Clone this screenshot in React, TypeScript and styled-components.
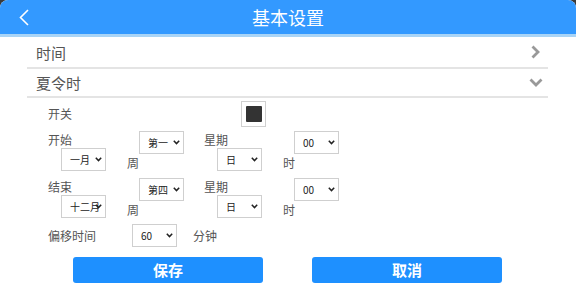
import React from 'react'
import styled, { createGlobalStyle } from 'styled-components'

const GlobalStyle = createGlobalStyle`
    html, body {
        margin: 0;
        padding: 0;
        background: #3a3a3a;
    }
    body {
        font-family: "Noto Sans CJK SC", "Noto Sans", sans-serif;
    }
`;

const Page = styled.div`
    width: 576px;
    height: 284px;
    background: #fff;
    border-radius: 8px 8px 0 0;
    overflow: hidden;
`;

const Header = styled.div`
    height: 34px;
    background: #3399ff;
    border-bottom: 3px solid #a9d4f6;
    display: grid;
    grid-template-columns: 1fr auto 1fr;
    align-items: center;
`;

const BackBtn = styled.div`
    display: flex;
    align-items: center;
    padding-left: 18px;
`;

const Title = styled.div`
    color: #fff;
    font-size: 18px;
    line-height: 20px;
`;

const Body = styled.div`
    margin: 0 28px 0 27px;
`;

const MenuRow = styled.div<{ $h: number }>`
    height: ${p => p.$h}px;
    border-bottom: 2px solid #e4e4e4;
    display: flex;
    align-items: center;
    justify-content: space-between;
    padding: 0 8px 0 9px;
    color: #555;
    font-size: 15px;
`;

const Content = styled.div`
    padding: 3px 0 2px 21px;
    border-bottom: 2px solid #e4e4e4;
    color: #555;
    font-size: 12px;
    line-height: 16px;
`;

const SwitchRow = styled.div`
    display: flex;
    align-items: center;
    height: 26px;
`;

const Label = styled.div<{ $w?: number }>`
    width: ${p => (p.$w ? `${p.$w}px` : 'auto')};
    white-space: nowrap;
`;

const CheckBox = styled.div`
    width: 23px;
    height: 24px;
    border: 1px solid #d0d0d0;
    display: flex;
    align-items: center;
    justify-content: center;
`;

const CheckInner = styled.div`
    width: 16px;
    height: 16px;
    background: #333;
    border-radius: 1px;
`;

const Block = styled.div<{ $mt: number }>`
    display: flex;
    align-items: flex-start;
    margin-top: ${p => p.$mt}px;
`;

const Col = styled.div<{ $w?: number }>`
    width: ${p => (p.$w ? `${p.$w}px` : 'auto')};
    display: flex;
    flex-direction: column;
    align-items: flex-start;
`;

const ColText = styled.div<{ $mt?: number }>`
    margin-top: ${p => p.$mt ?? 0}px;
    line-height: 16px;
`;

const Select = styled.div<{ $ml?: number }>`
    box-sizing: border-box;
    width: 45px;
    height: 23px;
    margin-left: ${p => p.$ml ?? 0}px;
    border: 1px solid #cfcfcf;
    background: #fff;
    display: flex;
    align-items: center;
    padding: 0 3px 0 8px;
    color: #222;
    font-size: 10px;
`;

const SelectText = styled.span`
    flex: 1 1 auto;
    min-width: 0;
    white-space: nowrap;
    overflow: visible;
`;

const OffsetRow = styled.div`
    display: flex;
    align-items: center;
    margin-top: 6px;
`;

const Unit = styled.div`
    margin-left: 16px;
`;

const Buttons = styled.div`
    display: flex;
    gap: 49px;
    padding-left: 25px;
    margin-top: 10px;
`;

const Button = styled.button`
    width: 190px;
    height: 26px;
    border: none;
    border-radius: 3px;
    background: #1e90ff;
    color: #fff;
    font-family: "Noto Sans CJK SC", sans-serif;
    font-size: 15px;
    font-weight: bold;
    padding: 0;
    line-height: 26px;
`;

const SelChevron = () => (
    <svg width="7" height="5" viewBox="0 0 7 5" style={{ flexShrink: 0 }}>
        <path d="M0.8 0.8 L3.5 3.6 L6.2 0.8" fill="none" stroke="#222" strokeWidth="1.5" />
    </svg>
)

const Sel: React.FC<{ v: string; ml?: number }> = ({ v, ml }) => (
    <Select $ml={ml}>
        <SelectText>{v}</SelectText>
        <SelChevron />
    </Select>
)

const TimeBlock: React.FC<{ label: string; month: string; week: string; mt: number }> = ({ label, month, week, mt }) => (
    <Block $mt={mt}>
        <Col $w={79}>
            <ColText $mt={1}>{label}</ColText>
            <Sel v={month} ml={13} />
        </Col>
        <Col $w={77}>
            <Sel v={week} ml={12} />
            <ColText $mt={1}>周</ColText>
        </Col>
        <Col $w={79}>
            <ColText $mt={1}>星期</ColText>
            <Sel v="日" ml={13} />
        </Col>
        <Col>
            <Sel v="00" ml={11} />
            <ColText $mt={1}>时</ColText>
        </Col>
    </Block>
)

const App: React.FC = () => {
    return (
        <>
            <GlobalStyle />
            <Page>
                <Header>
                    <BackBtn>
                        <svg width="12" height="17" viewBox="0 0 12 17">
                            <path d="M10 1 L2.5 8.5 L10 16" fill="none" stroke="#fff" strokeWidth="1.6" />
                        </svg>
                    </BackBtn>
                    <Title>基本设置</Title>
                    <div />
                </Header>
                <Body>
                    <MenuRow $h={30}>
                        <span>时间</span>
                        <svg width="9" height="14" viewBox="0 0 9 14">
                            <path d="M1.5 1.5 L7 7 L1.5 12.5" fill="none" stroke="#999" strokeWidth="2.8" />
                        </svg>
                    </MenuRow>
                    <MenuRow $h={27}>
                        <span>夏令时</span>
                        <svg width="14" height="9" viewBox="0 0 14 9" style={{ marginRight: -3 }}>
                            <path d="M1.5 1.5 L7 7 L12.5 1.5" fill="none" stroke="#999" strokeWidth="2.8" />
                        </svg>
                    </MenuRow>
                    <Content>
                        <SwitchRow>
                            <Label $w={193}>开关</Label>
                            <CheckBox>
                                <CheckInner />
                            </CheckBox>
                        </SwitchRow>
                        <TimeBlock label="开始" month="一月" week="第一" mt={4} />
                        <TimeBlock label="结束" month="十二月" week="第四" mt={7} />
                        <OffsetRow>
                            <Label $w={84}>偏移时间</Label>
                            <Sel v="60" />
                            <Unit>分钟</Unit>
                        </OffsetRow>
                        <Buttons>
                            <Button>保存</Button>
                            <Button>取消</Button>
                        </Buttons>
                    </Content>
                </Body>
            </Page>
        </>
    )
}

export default App
